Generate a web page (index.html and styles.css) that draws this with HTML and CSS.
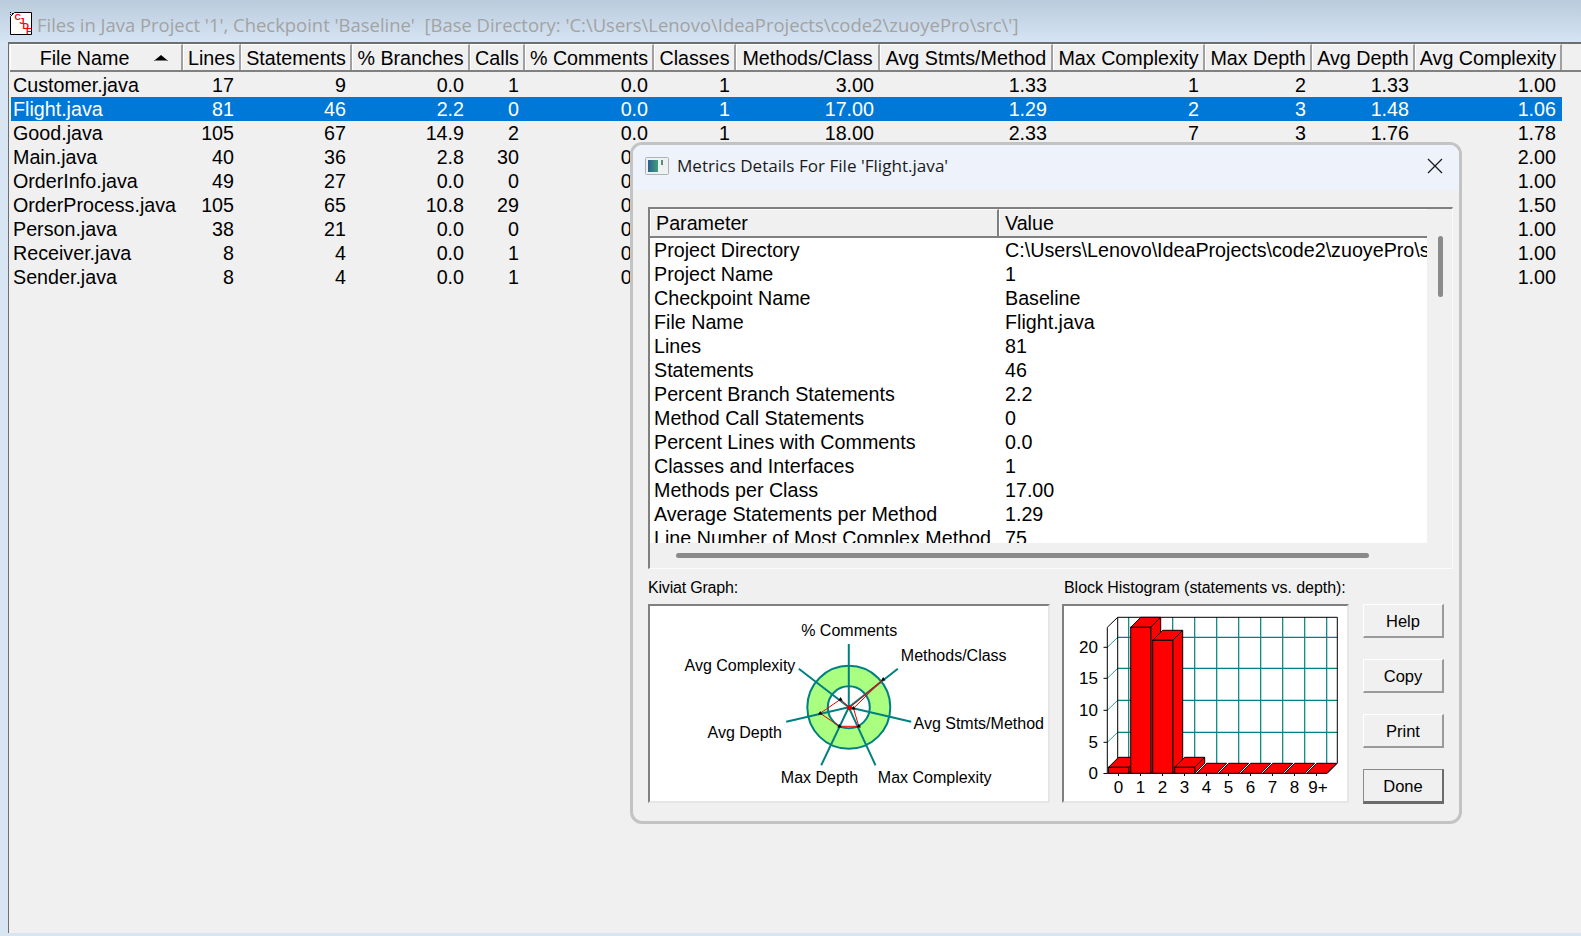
FILE: index.html
```html
<!DOCTYPE html>
<html lang="en">
<head>
<meta charset="utf-8">
<title>Files in Java Project</title>
<link rel="stylesheet" href="styles.css">
</head>
<body>
<div class="app">
  <header class="titlebar">
    <svg class="app-icon" width="24" height="25" viewBox="0 0 24 25">
      <path d="M5.500 1.500H22.500V23.500H1.500V5.500Z" fill="#fff" stroke="#000"/>
      <path d="M1 1h1v1h-1zM3 2h1v1h-1zM1 3h1v1h-1z" fill="#000"/>
      <text class="icon-letter" x="5.500" y="9">C</text>
      <text class="icon-letter" x="10.500" y="13">J</text>
      <text class="icon-letter" x="13.500" y="18">D</text>
      <text class="icon-letter" x="17" y="23">F</text>
    </svg>
    <span class="title-text">Files in Java Project '1', Checkpoint 'Baseline'&nbsp; [Base Directory: 'C:\Users\Lenovo\IdeaProjects\code2\zuoyePro\src\']</span>
  </header>
  <main class="main">
    <div class="grid-row head">
      <div class="hcell first">File Name<svg class="sort" width="14" height="6" viewBox="0 0 14 6"><path d="M7 0L13 5H1Z" fill="#000"/><path d="M0 5.500H14" stroke="#777"/></svg></div>
      <div class="hcell">Lines</div><div class="hcell">Statements</div><div class="hcell">% Branches</div><div class="hcell">Calls</div><div class="hcell">% Comments</div><div class="hcell">Classes</div><div class="hcell">Methods/Class</div><div class="hcell">Avg Stmts/Method</div><div class="hcell">Max Complexity</div><div class="hcell">Max Depth</div><div class="hcell">Avg Depth</div><div class="hcell">Avg Complexity</div>
    </div>
    <div class="rows">
      <div class="grid-row data"><span>Customer.java</span><span>17</span><span>9</span><span>0.0</span><span>1</span><span>0.0</span><span>1</span><span>3.00</span><span>1.33</span><span>1</span><span>2</span><span>1.33</span><span>1.00</span></div>
      <div class="grid-row data selected"><span>Flight.java</span><span>81</span><span>46</span><span>2.2</span><span>0</span><span>0.0</span><span>1</span><span>17.00</span><span>1.29</span><span>2</span><span>3</span><span>1.48</span><span>1.06</span></div>
      <div class="grid-row data"><span>Good.java</span><span>105</span><span>67</span><span>14.9</span><span>2</span><span>0.0</span><span>1</span><span>18.00</span><span>2.33</span><span>7</span><span>3</span><span>1.76</span><span>1.78</span></div>
      <div class="grid-row data"><span>Main.java</span><span>40</span><span>36</span><span>2.8</span><span>30</span><span>0.0</span><span></span><span></span><span></span><span></span><span></span><span></span><span>2.00</span></div>
      <div class="grid-row data"><span>OrderInfo.java</span><span>49</span><span>27</span><span>0.0</span><span>0</span><span>0.0</span><span></span><span></span><span></span><span></span><span></span><span></span><span>1.00</span></div>
      <div class="grid-row data"><span>OrderProcess.java</span><span>105</span><span>65</span><span>10.8</span><span>29</span><span>0.0</span><span></span><span></span><span></span><span></span><span></span><span></span><span>1.50</span></div>
      <div class="grid-row data"><span>Person.java</span><span>38</span><span>21</span><span>0.0</span><span>0</span><span>0.0</span><span></span><span></span><span></span><span></span><span></span><span></span><span>1.00</span></div>
      <div class="grid-row data"><span>Receiver.java</span><span>8</span><span>4</span><span>0.0</span><span>1</span><span>0.0</span><span></span><span></span><span></span><span></span><span></span><span></span><span>1.00</span></div>
      <div class="grid-row data"><span>Sender.java</span><span>8</span><span>4</span><span>0.0</span><span>1</span><span>0.0</span><span></span><span></span><span></span><span></span><span></span><span></span><span>1.00</span></div>
    </div>
  </main>

  <section class="dialog">
    <div class="dlg-title">
      <svg class="dlg-icon" width="24" height="18" viewBox="0 0 24 18">
        <defs><linearGradient id="dlgIconFill" x1="0" x2="1" y1="0" y2="0"><stop offset="0" stop-color="#2d5f8f"/><stop offset="1" stop-color="#3f9f78"/></linearGradient></defs>
        <rect x="0.500" y="0.500" width="23" height="17" rx="1" fill="#eef1f2" stroke="#a9b3b8"/>
        <rect x="3" y="3" width="10" height="12" fill="url(#dlgIconFill)"/>
        <rect x="16" y="3" width="2" height="5" fill="#5a8f6f"/>
      </svg>
      <span class="dlg-title-text">Metrics Details For File 'Flight.java'</span>
      <svg class="dlg-close" width="16" height="16" viewBox="0 0 16 16"><path d="M1 1L15 15M15 1L1 15" stroke="#1a1a1a" stroke-width="1.300"/></svg>
    </div>
    <div class="dlg-body">
      <div class="panel">
        <div class="panel-top">
          <div class="list">
            <div class="list-head"><div class="lhcell lh-param">Parameter</div><div class="lhcell lh-value">Value</div></div>
            <div class="list-rows">
              <div class="list-row"><span>Project Directory</span><span>C:\Users\Lenovo\IdeaProjects\code2\zuoyePro\src\</span></div>
              <div class="list-row"><span>Project Name</span><span>1</span></div>
              <div class="list-row"><span>Checkpoint Name</span><span>Baseline</span></div>
              <div class="list-row"><span>File Name</span><span>Flight.java</span></div>
              <div class="list-row"><span>Lines</span><span>81</span></div>
              <div class="list-row"><span>Statements</span><span>46</span></div>
              <div class="list-row"><span>Percent Branch Statements</span><span>2.2</span></div>
              <div class="list-row"><span>Method Call Statements</span><span>0</span></div>
              <div class="list-row"><span>Percent Lines with Comments</span><span>0.0</span></div>
              <div class="list-row"><span>Classes and Interfaces</span><span>1</span></div>
              <div class="list-row"><span>Methods per Class</span><span>17.00</span></div>
              <div class="list-row"><span>Average Statements per Method</span><span>1.29</span></div>
              <div class="list-row"><span>Line Number of Most Complex Method</span><span>75</span></div>
            </div>
          </div>
          <div class="vscroll"><div class="vthumb"></div></div>
        </div>
        <div class="hscroll"><div class="hthumb"></div></div>
      </div>
      <div class="lower">
        <div class="chart-col kiviat-col">
          <div class="chart-label">Kiviat Graph:</div>
          <div class="chart-box">
            <svg class="chart" width="398" height="195" viewBox="650.500 606 398 195">
              <circle cx="849.300" cy="707.300" r="41.500" fill="#aaff80" stroke="#008080" stroke-width="2"/>
              <circle cx="849.300" cy="707.300" r="21" fill="#fff" stroke="#008080" stroke-width="2"/>
              <g class="kv-axis">
                <path d="M849.300 707.300L849.300 644"/>
                <path d="M849.300 707.300L898.300 668.700"/>
                <path d="M849.300 707.300L911.700 721.700"/>
                <path d="M849.300 707.300L876 765.300"/>
                <path d="M849.300 707.300L821.700 765.300"/>
                <path d="M849.300 707.300L786.700 721.700"/>
                <path d="M849.300 707.300L799.300 668.700"/>
              </g>
              <polygon class="kv-poly" points="850,707.700 883.700,679.300 854,708.300 859.300,726.300 840,726.300 820.700,713.300 841,699.300"/>
              <g class="kv-mark">
                <circle class="kv-hub" cx="850" cy="707.700" r="2.500"/>
                <path d="M883.700 677l2.200 3.500h-4.400z"/><path d="M854 706l2.200 3.500h-4.400z"/><path d="M859.300 724l2.200 3.500h-4.400z"/><path d="M840 724l2.200 3.500h-4.400z"/><path d="M820.700 711l2.200 3.500h-4.400z"/><path d="M841 697l2.200 3.500h-4.400z"/>
              </g>
              <g class="chart-text">
                <text x="801.700" y="636">% Comments</text>
                <text x="901.300" y="661">Methods/Class</text>
                <text x="685" y="671">Avg Complexity</text>
                <text x="914" y="729.300">Avg Stmts/Method</text>
                <text x="708" y="738.300">Avg Depth</text>
                <text x="781.300" y="783.300">Max Depth</text>
                <text x="878.300" y="783.300">Max Complexity</text>
              </g>
            </svg>
          </div>
        </div>
        <div class="chart-col hist-col">
          <div class="chart-label hist-label">Block Histogram (statements vs. depth):</div>
          <div class="chart-box">
            <svg class="chart" width="284" height="195" viewBox="1064 606 284 195">
              <g class="grid-v">
                <path d="M1128.700 617V763M1150.700 617V763M1172.700 617V763M1194.700 617V763M1216.700 617V763M1238.700 617V763M1260.700 617V763M1282.700 617V763M1304.700 617V763M1326.700 617V763"/>
              </g>
              <g class="grid-v">
                <path d="M1117.700 637.300H1337.300M1117.700 668.300H1337.300M1117.700 700.300H1337.300M1117.700 732.300H1337.300"/>
              </g>
              <g class="grid-d">
                <path d="M1107.300 647.300L1117.700 637.300M1107.300 678.300L1117.700 668.300M1107.300 710.300L1117.700 700.300M1107.300 742.300L1117.700 732.300"/>
              </g>
              <g class="axis">
                <path d="M1107.300 773.300V627.300L1117.700 617.300H1337.300V763.300L1327.300 773.300H1107.300M1117.700 617.300V763.300"/>
                <path d="M1103.500 773.500H1107.300M1103.500 742.300H1107.300M1103.500 710.300H1107.300M1103.500 678.300H1107.300M1103.500 647.300H1107.300"/>
                <path d="M1118.500 773.300V776M1140.500 773.300V776M1162.500 773.300V776M1184.500 773.300V776M1206.500 773.300V776M1228.500 773.300V776M1250.500 773.300V776M1272.500 773.300V776M1294.500 773.300V776M1316.500 773.300V776"/>
              </g>
              <g class="bars">
                <polygon points="1108.500,767.300 1118.500,757.300 1138.700,757.300 1128.700,767.300"/>
                <polygon points="1128.700,767.300 1138.700,757.300 1138.700,763.300 1128.700,773.300"/>
                <rect x="1108.500" y="767.300" width="20.200" height="6"/>
                <polygon points="1130.700,627.300 1140.700,617.300 1160.700,617.300 1150.700,627.300"/>
                <polygon points="1150.700,627.300 1160.700,617.300 1160.700,763.300 1150.700,773.300"/>
                <rect x="1130.700" y="627.300" width="20" height="146"/>
                <polygon points="1152.700,640.300 1162.700,630.300 1182.700,630.300 1172.700,640.300"/>
                <polygon points="1172.700,640.300 1182.700,630.300 1182.700,763.300 1172.700,773.300"/>
                <rect x="1152.700" y="640.300" width="20" height="133"/>
                <polygon points="1174.700,767.300 1184.700,757.300 1204.700,757.300 1194.700,767.300"/>
                <polygon points="1194.700,767.300 1204.700,757.300 1204.700,763.300 1194.700,773.300"/>
                <rect x="1174.700" y="767.300" width="20" height="6"/>
                <polygon points="1196.700,773.300 1206.700,763.300 1226.700,763.300 1216.700,773.300"/>
                <polygon points="1218.700,773.300 1228.700,763.300 1248.700,763.300 1238.700,773.300"/>
                <polygon points="1240.700,773.300 1250.700,763.300 1270.700,763.300 1260.700,773.300"/>
                <polygon points="1262.700,773.300 1272.700,763.300 1292.700,763.300 1282.700,773.300"/>
                <polygon points="1284.700,773.300 1294.700,763.300 1314.700,763.300 1304.700,773.300"/>
                <polygon points="1306.700,773.300 1316.700,763.300 1336.700,763.300 1326.700,773.300"/>
              </g>
              <g class="chart-text end">
                <text x="1098" y="652.700">20</text>
                <text x="1098" y="684">15</text>
                <text x="1098" y="716">10</text>
                <text x="1098" y="747.700">5</text>
                <text x="1098" y="778.700">0</text>
              </g>
              <g class="chart-text middle">
                <text x="1118.500" y="792.700">0</text>
                <text x="1140.500" y="792.700">1</text>
                <text x="1162.500" y="792.700">2</text>
                <text x="1184.500" y="792.700">3</text>
                <text x="1206.500" y="792.700">4</text>
                <text x="1228.500" y="792.700">5</text>
                <text x="1250.500" y="792.700">6</text>
                <text x="1272.500" y="792.700">7</text>
                <text x="1294.500" y="792.700">8</text>
                <text x="1318" y="792.700">9+</text>
              </g>
            </svg>
          </div>
        </div>
        <div class="buttons">
          <button class="btn" type="button">Help</button>
          <button class="btn" type="button">Copy</button>
          <button class="btn" type="button">Print</button>
          <button class="btn default" type="button">Done</button>
        </div>
      </div>
    </div>
  </section>
</div>
</body>
</html>
```

FILE: styles.css
```css
* { box-sizing: border-box; }
html, body { margin: 0; padding: 0; }
body {
  width: 1581px;
  height: 936px;
  overflow: hidden;
  font-family: "Liberation Sans", Arial, sans-serif;
  color: #000;
  background: #d8e5f3;
}
.app {
  position: relative;
  width: 1581px;
  height: 936px;
  display: flex;
  flex-direction: column;
}
.titlebar {
  height: 42px;
  flex: none;
  display: flex;
  align-items: flex-start;
  padding: 11px 0 0 9px;
  gap: 4px;
  background: linear-gradient(#b9cbdc, #d6e4f3);
}
.app-icon { flex: none; }
.icon-letter {
  font-family: "Liberation Sans", sans-serif;
  font-size: 9px;
  font-weight: 700;
  fill: #f00000;
}
.title-text {
  font-family: "Open Sans", sans-serif;
  font-size: 18.440px;
  line-height: 28px;
  color: #a3a3a3;
  white-space: pre;
}
.main {
  flex: 1;
  margin: 0 0 3px 8px;
  padding-left: 1px;
  background: #f0f0f0;
  border-left: 1px solid #6e6e6e;
  border-top: 2px solid #6e6e6e;
  font-size: 19.700px;
}
.grid-row {
  display: grid;
  grid-template-columns: 173px 58px 111px 118px 55px 129px 82px 144px 173px 152px 107px 103px 147px;
}
.head {
  height: 26px;
  border-bottom: 2px solid #808080;
  box-sizing: content-box;
}
.hcell {
  height: 26px;
  line-height: 26px;
  text-align: center;
  white-space: nowrap;
  border-right: 2px solid #a0a0a0;
  border-left: 1px solid #fff;
  border-top: 1px solid #fff;
}
.hcell.first {
  position: relative;
  padding-right: 34px;
  padding-left: 11px;
  text-align: center;
}
.sort {
  position: absolute;
  right: 13px;
  top: 10px;
}
.rows { padding-top: 1px; }
.data {
  height: 24px;
  line-height: 24px;
  margin-left: 1px;
  grid-template-columns: 171px 58px 112px 118px 55px 129px 82px 144px 173px 152px 107px 103px 147px;
}
.data span {
  text-align: right;
  padding-right: 6px;
  white-space: nowrap;
}
.data span:first-child {
  text-align: left;
  padding: 0 0 0 2px;
}
.selected {
  background: #0078d7;
  color: #fff;
  width: 1551px;
}
.dialog {
  position: absolute;
  left: 630px;
  top: 142px;
  width: 832px;
  height: 682px;
  border: 3px solid #c3c3c3;
  border-radius: 12px;
  background: #f0f0f0;
  overflow: hidden;
  display: flex;
  flex-direction: column;
}
.dlg-title {
  height: 45px;
  flex: none;
  background: #eef3fb;
  display: flex;
  align-items: center;
  padding: 0 16px 4px 12px;
  font-family: "Open Sans", sans-serif;
  font-size: 17.100px;
  color: #1a1a1a;
}
.dlg-icon { flex: none; margin-right: 8px; }
.dlg-title-text { flex: 1; white-space: pre; }
.dlg-close { flex: none; }
.dlg-body {
  flex: 1;
  padding: 17px 0 0 15px;
  display: flex;
  flex-direction: column;
}
.panel {
  width: 805px;
  height: 362px;
  border-top: 2px solid #808080;
  border-left: 2px solid #808080;
  border-right: 1px solid #fafafa;
  border-bottom: 1px solid #fafafa;
  display: flex;
  flex-direction: column;
  font-size: 19.700px;
}
.panel-top {
  display: flex;
  height: 334px;
}
.list {
  width: 777px;
  height: 334px;
  flex: none;
  overflow: hidden;
}
.list-head {
  display: grid;
  grid-template-columns: 349px 428px;
  height: 27px;
  border-bottom: 2px solid #808080;
  box-sizing: content-box;
}
.lhcell {
  height: 27px;
  line-height: 26px;
  padding-left: 5px;
  border-top: 1px solid #fff;
  border-left: 1px solid #fff;
  white-space: nowrap;
}
.lh-param { border-right: 2px solid #808080; }
.lh-value { padding-left: 5px; }
.list-rows {
  height: 305px;
  background: #fff;
  overflow: hidden;
}
.list-row {
  display: grid;
  grid-template-columns: 348px 429px;
  height: 24px;
  line-height: 24px;
  white-space: nowrap;
}
.list-row span { padding-left: 4px; overflow: hidden; }
.list-row span + span { padding-left: 7px; }
.vscroll {
  flex: 1;
  display: flex;
  justify-content: flex-start;
  padding: 27px 0 0 11px;
}
.vthumb {
  width: 5px;
  height: 61px;
  border-radius: 3px;
  background: #8a8a8a;
}
.hscroll {
  flex: 1;
  padding: 10px 0 0 26px;
}
.hthumb {
  width: 693px;
  height: 5px;
  border-radius: 3px;
  background: #8a8a8a;
}
.lower {
  margin-top: 8px;
  display: flex;
  align-items: flex-start;
}
.chart-col {
  display: flex;
  flex-direction: column;
}
.kiviat-col { width: 402px; margin-right: 12px; }
.hist-col { width: 287px; margin-right: 14px; }
.chart-label {
  height: 27px;
  line-height: 22px;
  font-size: 16px;
  letter-spacing: -0.2px;
  white-space: nowrap;
}
.hist-label {
  letter-spacing: -0.05px;
  padding-left: 2px;
}
.chart-box {
  height: 199px;
  border-top: 2px solid #808080;
  border-left: 2px solid #808080;
  border-right: 2px solid #e6e6e6;
  border-bottom: 2px solid #e6e6e6;
  background: #fff;
}
.chart { display: block; }
.chart-text text {
  font-family: "Liberation Sans", sans-serif;
  font-size: 16px;
  fill: #000;
}
.chart-text.end text { text-anchor: end; font-size: 17px; }
.chart-text.middle text { text-anchor: middle; font-size: 17px; }
.kv-axis path { stroke: #008080; stroke-width: 2; fill: none; }
.kv-poly { fill: none; stroke: #f00000; stroke-width: 1; }
.kv-mark path { fill: #000; }
.kv-hub { fill: #e00000; }
.grid-v path { stroke: #008080; stroke-width: 1.200; fill: none; }
.grid-d path { stroke: #008080; stroke-width: 0.800; fill: none; }
.axis path { stroke: #000; stroke-width: 1; fill: none; }
.bars polygon, .bars rect { fill: #ff0000; stroke: #000; stroke-width: 1; }
.buttons {
  display: flex;
  flex-direction: column;
  gap: 21px;
  margin-top: 27px;
}
.btn {
  width: 81px;
  height: 34px;
  padding: 1px 0 0;
  background: #f0f0f0;
  font-family: "Liberation Sans", sans-serif;
  font-size: 16.500px;
  color: #000;
  border-top: 1px solid #fff;
  border-left: 1px solid #fff;
  border-right: 2px solid #9a9a9a;
  border-bottom: 2px solid #9a9a9a;
}
.btn.default {
  height: 35px;
  padding-top: 2px;
  border-top: 1px solid #8a8a8a;
  border-left: 1px solid #8a8a8a;
  border-right: 2px solid #6b6b6b;
  border-bottom: 3px solid #6b6b6b;
}
```
